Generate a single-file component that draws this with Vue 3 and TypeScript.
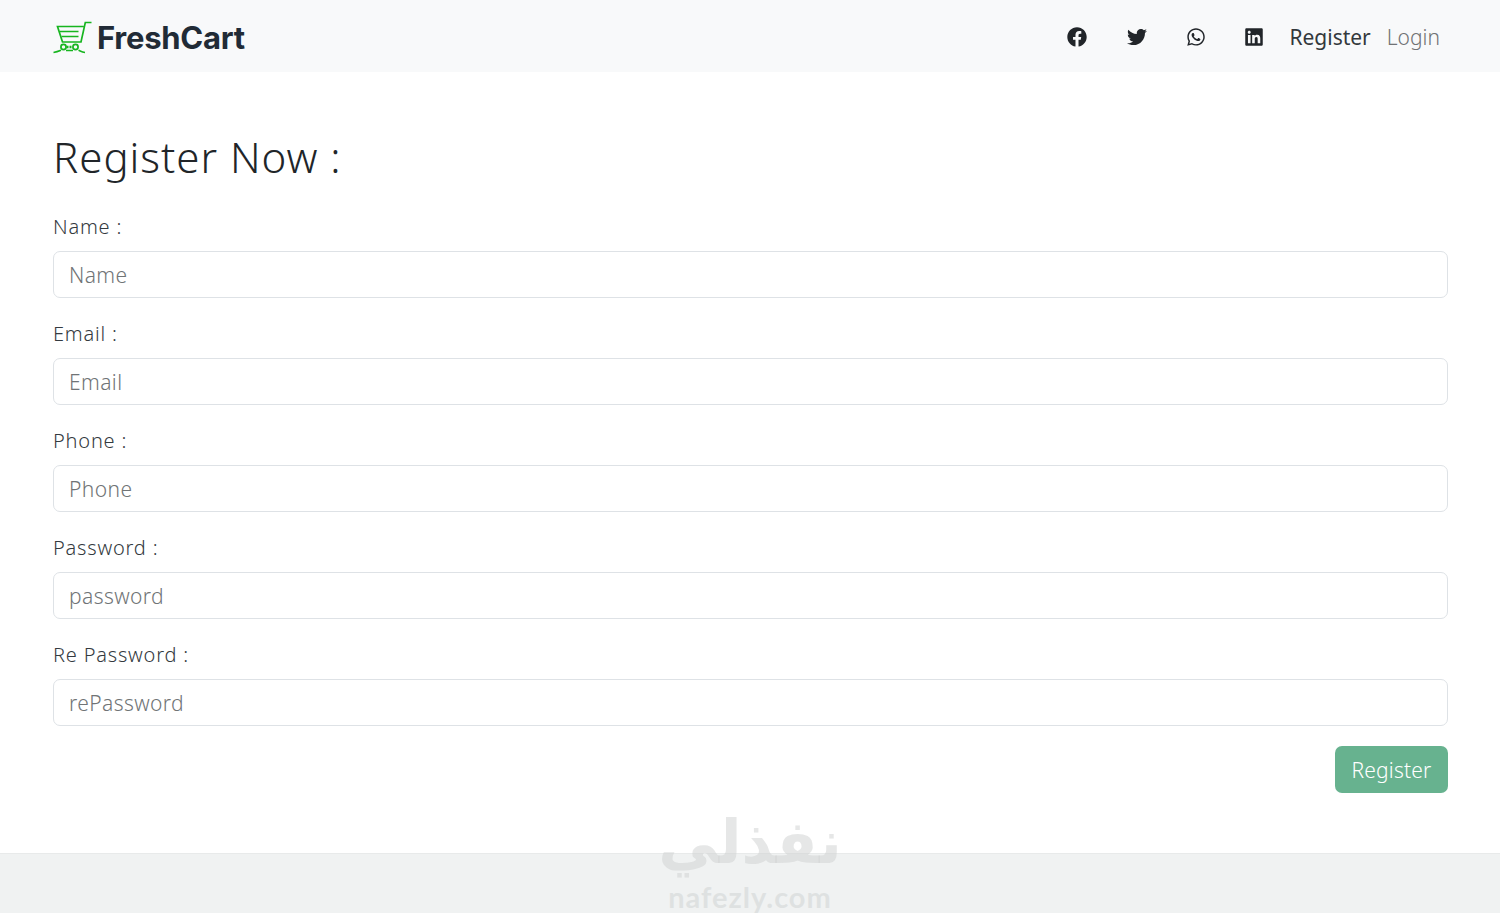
<script setup lang="ts">
interface Field {
  label: string
  placeholder: string
  type: string
}

const fields: Field[] = [
  { label: 'Name :', placeholder: 'Name', type: 'text' },
  { label: 'Email :', placeholder: 'Email', type: 'email' },
  { label: 'Phone :', placeholder: 'Phone', type: 'tel' },
  { label: 'Password :', placeholder: 'password', type: 'password' },
  { label: 'Re Password :', placeholder: 'rePassword', type: 'password' },
]
</script>

<template>
  <div class="page">
    <nav class="navbar">
      <a class="brand" href="#">
        <svg class="cart" width="40" height="33" viewBox="0 0 40 33" fill="none" stroke="#17b51f" stroke-width="1.7">
          <path d="M38.5 1.5h-6.2L28 21H9.5L4.5 5.5h26" />
          <path d="M7 10.5h18.5M8.5 15.5h17" stroke-width="1.7" />
          <circle cx="10.5" cy="26" r="2.6" />
          <circle cx="22.5" cy="26" r="2.6" />
          <path d="M13.5 26h6" stroke-width="2.4" stroke-dasharray="2 1" />
          <path d="M0.5 31.5c3-.5 5-1.2 7.5-2.2M32 31.5c-3-.5-4-1.2-6.5-2.2M13 29.5h7" />
        </svg>
        <span>FreshCart</span>
      </a>
      <ul class="nav-right">
        <li class="social">
          <svg width="20" height="20" viewBox="0 0 512 512"><path d="M504 256C504 119 393 8 256 8S8 119 8 256c0 123.78 90.69 226.38 209.25 245V327.69h-63V256h63v-54.64c0-62.15 37-96.48 93.67-96.48 27.14 0 55.52 4.84 55.52 4.84v61h-31.28c-30.8 0-40.41 19.12-40.41 38.73V256h68.78l-11 71.69h-57.78V501C413.31 482.38 504 379.78 504 256z" /></svg>
        </li>
        <li class="social">
          <svg width="20" height="20" viewBox="0 0 512 512"><path d="M459.37 151.716c.325 4.548.325 9.097.325 13.645 0 138.72-105.583 298.558-298.558 298.558-59.452 0-114.68-17.219-161.137-47.106 8.447.974 16.568 1.299 25.34 1.299 49.055 0 94.213-16.568 130.274-44.832-46.132-.975-84.792-31.188-98.112-72.772 6.498.974 12.995 1.624 19.818 1.624 9.421 0 18.843-1.3 27.614-3.573-48.081-9.747-84.143-51.98-84.143-102.985v-1.299c13.969 7.797 30.214 12.67 47.431 13.319-28.264-18.843-46.781-51.005-46.781-87.391 0-19.492 5.197-37.36 14.294-52.954 51.655 63.675 129.3 105.258 216.365 109.807-1.624-7.797-2.599-15.918-2.599-24.04 0-57.828 46.782-104.934 104.934-104.934 30.213 0 57.502 12.67 76.67 33.137 23.715-4.548 46.456-13.32 66.599-25.34-7.798 24.366-24.366 44.833-46.132 57.827 21.117-2.273 41.584-8.122 60.426-16.243-14.292 20.791-32.161 39.308-52.628 54.253z" /></svg>
        </li>
        <li class="social">
          <svg width="18" height="20" viewBox="0 0 448 512"><path d="M380.9 97.1C339 55.1 283.2 32 223.9 32c-122.4 0-222 99.6-222 222 0 39.1 10.2 77.3 29.6 111L0 480l117.7-30.9c32.4 17.7 68.9 27 106.1 27h.1c122.3 0 224.1-99.6 224.1-222 0-59.3-25.2-115-67.1-157zm-157 341.6c-33.2 0-65.7-8.9-94-25.7l-6.7-4-69.8 18.3L72 359.2l-4.4-7c-18.5-29.4-28.2-63.3-28.2-98.2 0-101.7 82.8-184.5 184.6-184.5 49.3 0 95.6 19.2 130.4 54.1 34.8 34.9 56.2 81.2 56.1 130.5 0 101.8-84.9 184.6-186.6 184.6zm101.2-138.2c-5.5-2.8-32.8-16.2-37.9-18-5.1-1.9-8.8-2.8-12.5 2.8-3.7 5.6-14.3 18-17.6 21.8-3.2 3.7-6.5 4.2-12 1.4-32.6-16.3-54-29.1-75.5-66-5.7-9.8 5.7-9.1 16.3-30.3 1.8-3.7.9-6.9-.5-9.7-1.4-2.8-12.5-30.1-17.1-41.2-4.5-10.8-9.1-9.3-12.5-9.5-3.2-.2-6.9-.2-10.6-.2-3.7 0-9.7 1.4-14.8 6.9-5.1 5.6-19.4 19-19.4 46.3 0 27.3 19.9 53.7 22.6 57.4 2.8 3.7 39.1 59.7 94.8 83.8 35.2 15.2 49 16.5 66.6 13.9 10.7-1.6 32.8-13.4 37.4-26.4 4.6-13 4.6-24.1 3.2-26.4-1.3-2.5-5-3.9-10.5-6.6z" /></svg>
        </li>
        <li class="social">
          <svg width="18" height="20" viewBox="0 0 448 512"><path d="M416 32H31.9C14.3 32 0 46.5 0 64.3v383.4C0 465.5 14.3 480 31.9 480H416c17.6 0 32-14.5 32-32.3V64.3c0-17.8-14.4-32.3-32-32.3zM135.4 416H69V202.2h66.5V416zm-33.2-243c-21.3 0-38.5-17.3-38.5-38.5S80.9 96 102.2 96c21.2 0 38.5 17.3 38.5 38.5 0 21.3-17.2 38.5-38.5 38.5zm282.1 243h-66.4V312c0-24.8-.5-56.7-34.5-56.7-34.6 0-39.9 27-39.9 54.9V416h-66.4V202.2h63.7v29.2h.9c8.9-16.8 30.6-34.5 62.9-34.5 67.2 0 79.7 44.3 79.7 101.9V416z" /></svg>
        </li>
        <li><a class="nav-link active" href="#">Register</a></li>
        <li><a class="nav-link" href="#">Login</a></li>
      </ul>
    </nav>

    <main class="content">
      <h2 class="title">Register Now :</h2>
      <form class="form" @submit.prevent>
        <div v-for="field in fields" :key="field.label" class="field">
          <label class="label">{{ field.label }}</label>
          <input class="input" :type="field.type" :placeholder="field.placeholder" />
        </div>
        <div class="actions">
          <button class="submit" type="submit">Register</button>
        </div>
      </form>
    </main>

    <footer class="footer"></footer>

    <div class="watermark">
      <div class="wm-arabic" dir="rtl">نفذلي</div>
      <div class="wm-latin">nafezly.com</div>
    </div>
  </div>
</template>

<style scoped>
.page {
  position: relative;
  height: 913px;
  display: flex;
  flex-direction: column;
  overflow: hidden;
  background: #fff;
  font-family: 'Noto Sans', 'Open Sans', sans-serif;
  font-weight: 300;
  color: #212529;
}

.navbar {
  height: 72px;
  flex-shrink: 0;
  box-sizing: border-box;
  display: flex;
  align-items: center;
  justify-content: space-between;
  padding: 3px 52px 0 53px;
  background: #f8f9fa;
}

.brand {
  display: flex;
  align-items: center;
  gap: 4px;
  text-decoration: none;
  font-family: Inter, sans-serif;
  font-size: 31px;
  font-weight: 700;
  letter-spacing: -0.25px;
  color: #212b36;
}

.cart {
  display: block;
}

.nav-right {
  display: flex;
  align-items: center;
  list-style: none;
  margin: -2px 0 0;
  padding: 0;
}

.social {
  display: flex;
  margin-right: 40px;
}

.social svg {
  display: block;
  fill: #212529;
}

.social:nth-child(4) {
  margin-right: 18px;
}

.nav-link {
  display: block;
  padding: 0 8px;
  font-size: 21px;
  line-height: 32px;
  text-decoration: none;
  color: #707274;
}

.nav-link.active {
  font-weight: 400;
  color: #33383c;
}

.content {
  flex: 1;
  padding: 55px 52px 0 53px;
}

.title {
  margin: 0 0 24px;
  font-size: 42px;
  line-height: 60px;
  font-weight: 300;
  letter-spacing: 1px;
}

.form {
  display: flex;
  flex-direction: column;
}

.field {
  display: flex;
  flex-direction: column;
  margin-bottom: 20px;
}

.label {
  font-size: 20px;
  line-height: 29px;
  margin-top: 1px;
  margin-bottom: 10px;
  letter-spacing: 0.8px;
  color: #343a40;
}

.input {
  height: 47px;
  box-sizing: border-box;
  padding: 0 15px;
  border: 1px solid #dee2e6;
  border-radius: 7px;
  background: #fff;
  font: inherit;
  font-size: 21px;
  letter-spacing: 0.4px;
  color: #212529;
  outline: none;
}

.input::placeholder {
  color: #707476;
  opacity: 1;
}

.actions {
  display: flex;
  justify-content: flex-end;
}

.submit {
  width: 113px;
  height: 47px;
  border: none;
  border-radius: 7px;
  background: #67b28f;
  color: #fff;
  font: inherit;
  font-size: 21px;
  letter-spacing: 0.2px;
}

.footer {
  height: 60px;
  flex-shrink: 0;
  box-sizing: border-box;
  background: #f0f2f2;
  border-top: 1px solid #e8eaea;
}

.watermark {
  position: absolute;
  left: 650px;
  top: 809px;
  width: 200px;
  display: flex;
  flex-direction: column;
  align-items: center;
  color: rgba(205, 208, 208, 0.5);
  font-family: 'DejaVu Sans', sans-serif;
  font-weight: 700;
  pointer-events: none;
}

.wm-arabic {
  font-size: 60px;
  line-height: 66px;
}

.wm-latin {
  margin-top: 8px;
  font-family: Lato, sans-serif;
  font-size: 29px;
  line-height: 28px;
  letter-spacing: 1px;
}
</style>

<style>
body {
  margin: 0;
}
</style>
